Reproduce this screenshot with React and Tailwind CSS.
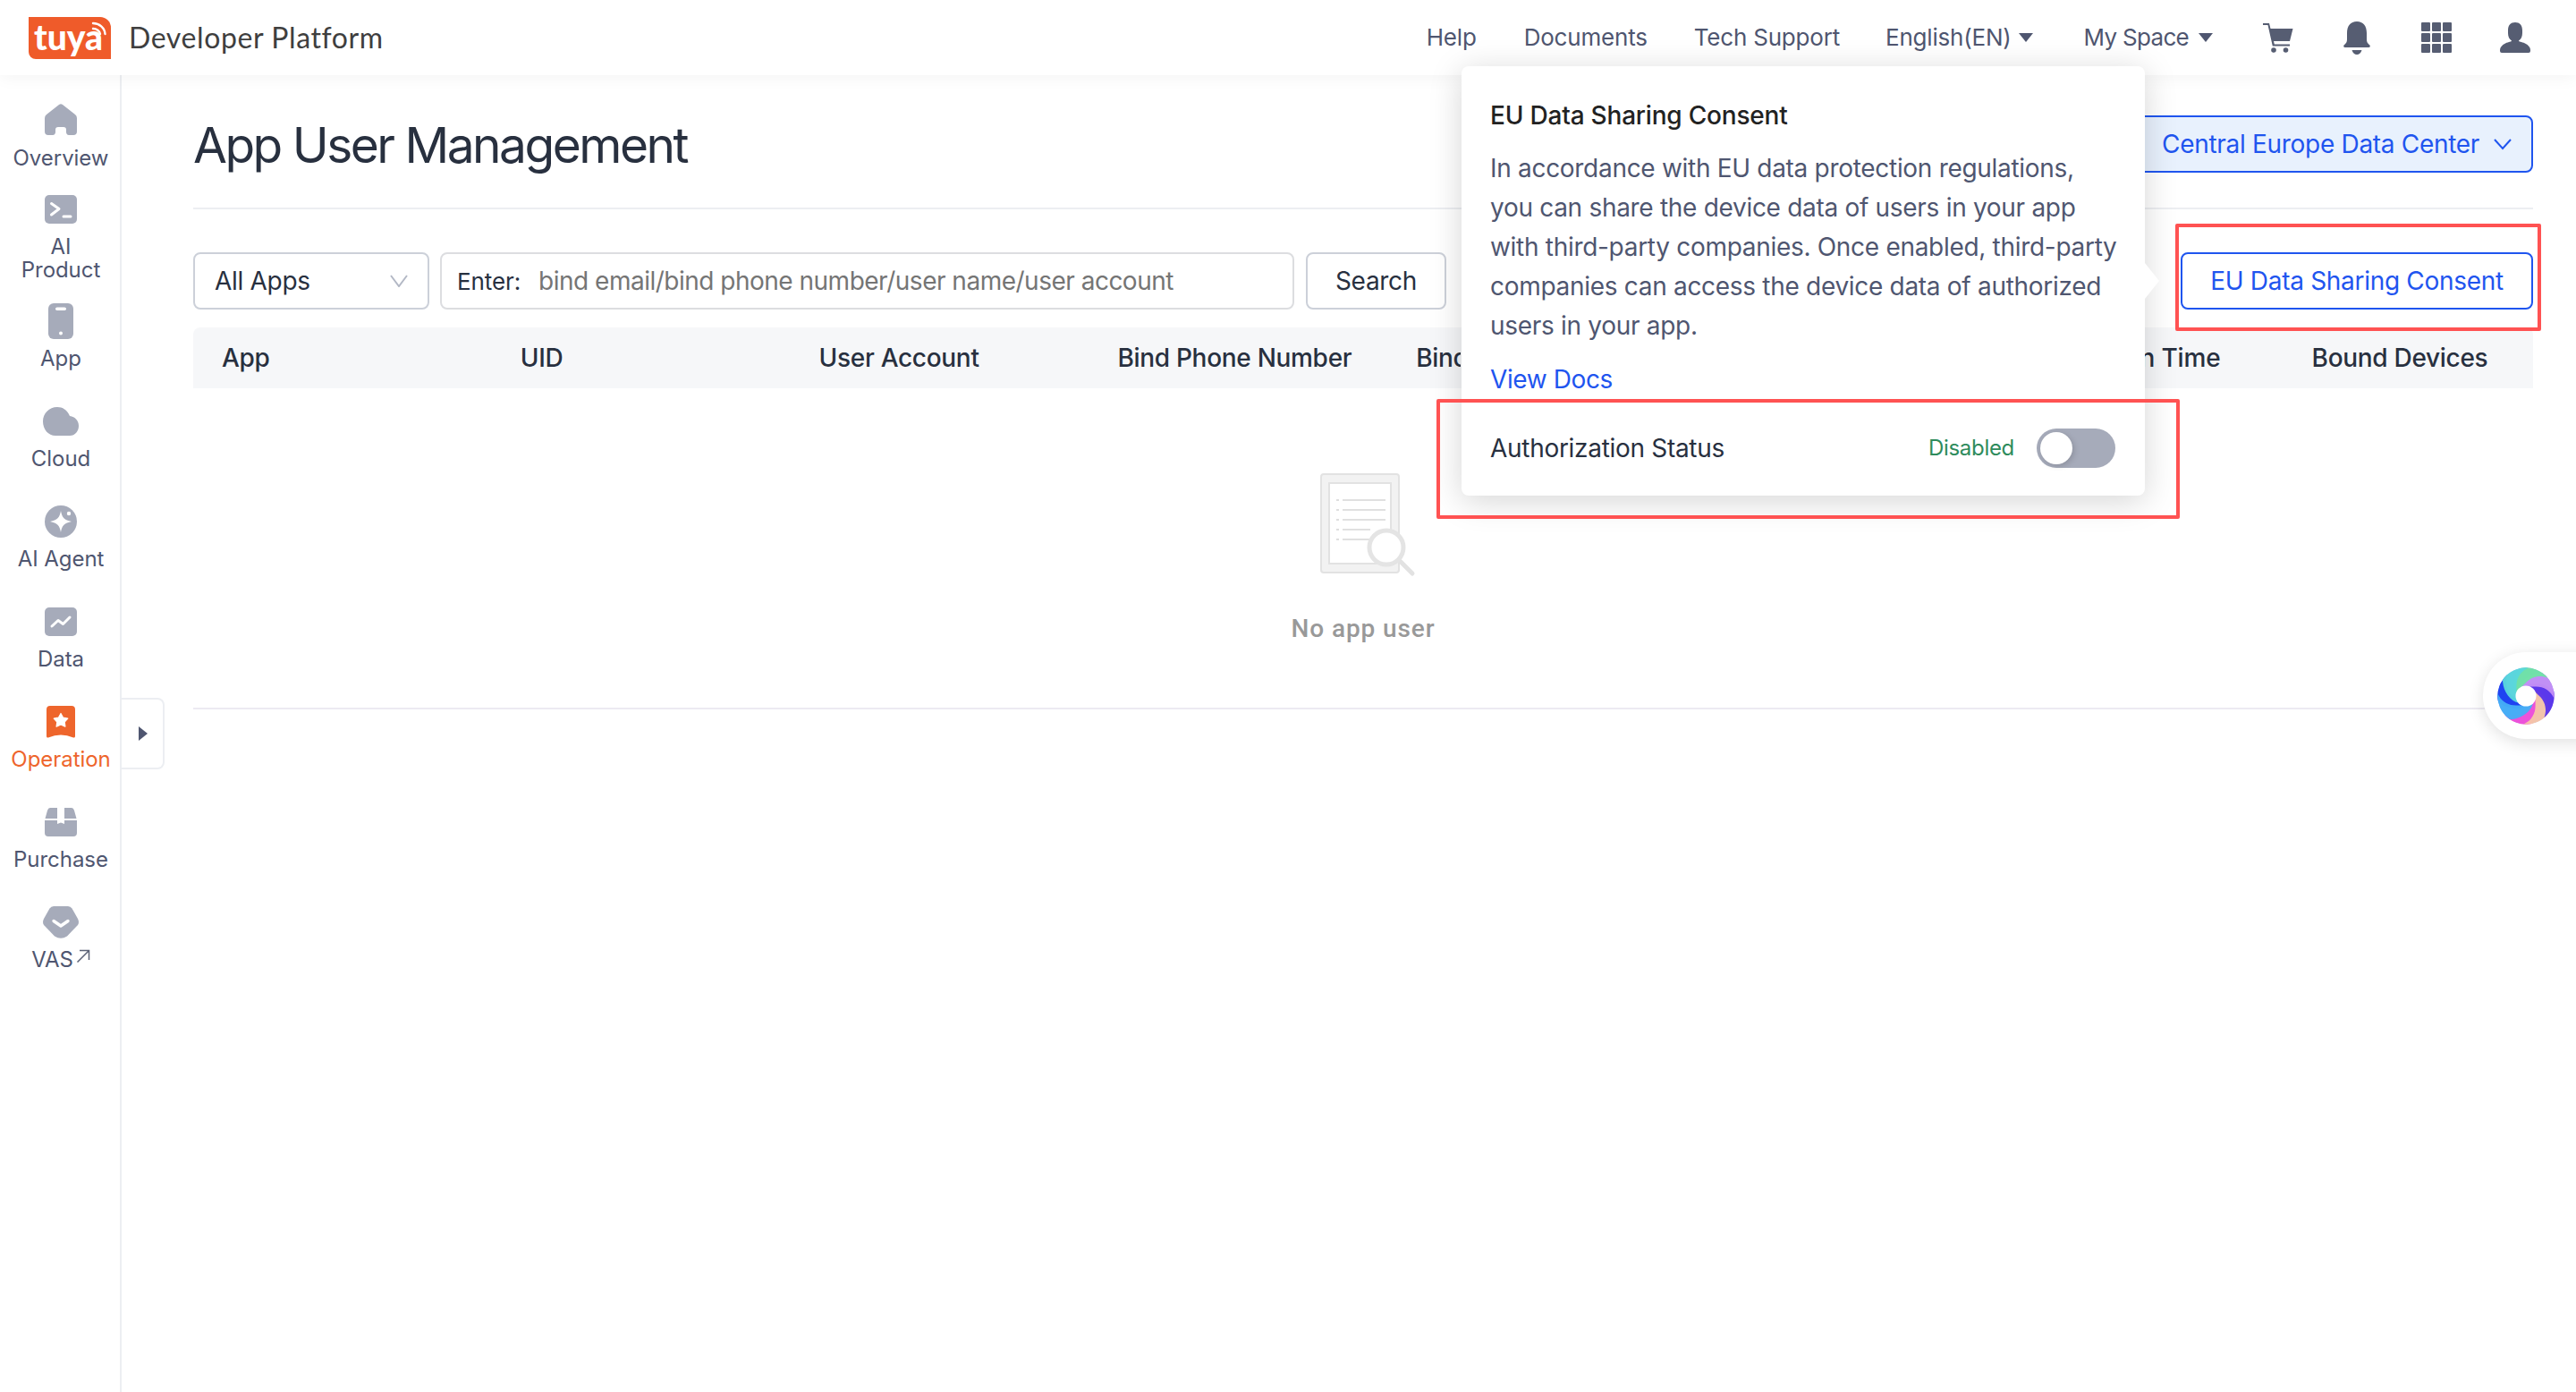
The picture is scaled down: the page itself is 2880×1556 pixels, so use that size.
const I = "fill-[#a6abba]";

const icons = {
  home: (
    <svg width="36" height="36" viewBox="0 0 36 36" className={I}>
      <path d="M16 1 Q18 -0.5 20 1 L34 12 Q36 13.5 36 16 V31 Q36 35 32 35 H27 Q24.5 35 24 32 V29 Q24 26 21 26 H15 Q12 26 12 29 V32 Q11.5 35 9 35 H4 Q0 35 0 31 V16 Q0 13.5 2 12 Z" />
    </svg>
  ),
  term: (
    <svg width="36" height="32" viewBox="0 0 36 32">
      <rect width="36" height="32" rx="5" className={I} />
      <path d="M7.5 9.5 L16 15.5 L7.5 22" fill="none" stroke="#fff" strokeWidth="3" strokeLinecap="round" strokeLinejoin="round" />
      <path d="M21 24 H29" stroke="#fff" strokeWidth="3" strokeLinecap="round" />
    </svg>
  ),
  phone: (
    <svg width="28" height="40" viewBox="0 0 28 40">
      <rect width="28" height="40" rx="6" className={I} />
      <rect x="8" y="4.5" width="12" height="3.5" rx="1.75" fill="#fff" />
      <circle cx="14" cy="33.5" r="2" fill="#fff" />
    </svg>
  ),
  cloud: (
    <svg width="40" height="32" viewBox="0 0 40 32" className={I}>
      <path d="M16 0 C22 0 27 3 30 10 C36 11 40 15 40 21 C40 27 36 32 30 32 H14 C6 32 0 25 0 16 C0 7 7 0 16 0 Z" />
    </svg>
  ),
  agent: (
    <svg width="36" height="36" viewBox="0 0 36 36">
      <circle cx="18" cy="18" r="18" className={I} />
      <path d="M18 6 C19.2 13.5 22 16.5 30 18 C22 19.5 19.2 22.5 18 30 C16.8 22.5 14 19.5 6 18 C14 16.5 16.8 13.5 18 6 Z" fill="#fff" />
      <circle cx="27" cy="9" r="2.2" fill="#fff" />
    </svg>
  ),
  data: (
    <svg width="36" height="32" viewBox="0 0 36 32">
      <rect width="36" height="32" rx="5" className={I} />
      <path d="M8 21 L15 14.5 L20.5 18.5 L28 11" fill="none" stroke="#fff" strokeWidth="3" strokeLinecap="round" strokeLinejoin="round" />
    </svg>
  ),
  op: (
    <svg width="32" height="36" viewBox="0 0 32 36">
      <path d="M4 0 H28 Q32 0 32 4 V34 Q32 36 30 35.5 Q23 32.5 16 32.5 Q9 32.5 2 35.5 Q0 36 0 34 V4 Q0 0 4 0 Z" fill="#ee652c" />
      <path d="M16 8.5 L18.6 13.2 L23.8 14.2 L20.2 18 L20.9 23.2 L16 21 L11.1 23.2 L11.8 18 L8.2 14.2 L13.4 13.2 Z" fill="#fff" stroke="#fff" strokeWidth="1.2" strokeLinejoin="round" />
    </svg>
  ),
  box: (
    <svg width="36" height="32" viewBox="0 0 36 32" className={I}>
      <path d="M6 0 H14 V12 H0.5 L3 3 Q3.8 0 6 0 Z" />
      <path d="M22 0 H30 Q32.2 0 33 3 L35.5 12 H22 Z" />
      <path d="M0 14 H14 V18 L18 16.5 L22 18 V14 H36 V28 Q36 32 32 32 H4 Q0 32 0 28 Z" />
    </svg>
  ),
  vas: (
    <svg width="40" height="36" viewBox="0 0 40 36">
      <path d="M12 0 H28 Q31 0 32.5 2.5 L39 14 Q41 18 39 21 L27 33.5 Q20 38 13 33.5 L1 21 Q-1 18 1 14 L7.5 2.5 Q9 0 12 0 Z" className={I} />
      <path d="M12 16.5 L20 22 L28 16.5" fill="none" stroke="#fff" strokeWidth="3.4" strokeLinecap="round" strokeLinejoin="round" />
    </svg>
  ),
};

const navItems = [
  { icon: icons.home, lines: ["Overview"], h: "h-[100px]", mt: "mt-[12px]" },
  { icon: icons.term, lines: ["AI", "Product"], h: "h-[125px]", mt: "mt-[11px]" },
  { icon: icons.phone, lines: ["App"], h: "h-[112px]", mt: "mt-[11px]" },
  { icon: icons.cloud, lines: ["Cloud"], h: "h-[112px]", mt: "mt-[11px]" },
  { icon: icons.agent, lines: ["AI Agent"], h: "h-[112px]", mt: "mt-[11px]" },
  { icon: icons.data, lines: ["Data"], h: "h-[112px]", mt: "mt-[11px]" },
  { icon: icons.op, lines: ["Operation"], h: "h-[112px]", mt: "mt-[11px]", active: true },
  { icon: icons.box, lines: ["Purchase"], h: "h-[112px]", mt: "mt-[11px]" },
  { icon: icons.vas, lines: ["VAS"], h: "h-[112px]", mt: "mt-[11px]", ext: true },
];

function Caret({ className }) {
  return (
    <svg width="18" height="12" viewBox="0 0 18 12" className={className}>
      <path d="M1 1 H17 L9 11 Z" fill="#4f5670" />
    </svg>
  );
}

function Orb() {
  const petals = [
    ["#f04fd8", 170],
    ["#f7c6a8", 125],
    ["#5a34ea", 80],
    ["#c490f5", 35],
    ["#6fe3a5", -10],
    ["#1b3ff0", 260],
    ["#45aef6", 215],
    ["#5ad7dc", 305],
  ];
  return (
    <svg width="64" height="64" viewBox="-32 -32 64 64">
      <circle r="31.5" fill="#7f8cf0" />
      {petals.map(([c, a]) => (
        <path
          key={a}
          d="M0 -31.7 A31.7 31.7 0 0 1 27.4 -15.9 C19 -21 10 -20 3 -15 C-3 -11 -7 -8 -11 -2 C-15 -11 -10 -25 0 -31.7 Z"
          fill={c}
          opacity="0.96"
          transform={`rotate(${a})`}
        />
      ))}
      <circle r="11.5" fill="#fff" />
    </svg>
  );
}

function Empty() {
  return (
    <svg width="108" height="116" viewBox="0 0 108 116">
      <rect x="1" y="1" width="87" height="110" rx="3" fill="#f2f2f2" stroke="#e2e2e2" strokeWidth="2" />
      <rect x="10" y="11" width="69" height="90" fill="#fff" stroke="#e2e2e2" strokeWidth="2" />
      {[30, 41, 52, 63, 74].map((y, i) => (
        <g key={y}>
          <path d={`M18 ${y} H21`} stroke="#dedede" strokeWidth="2" />
          <path d={`M25 ${y} H${i < 3 ? 73 : 56}`} stroke="#e0e0e0" strokeWidth="2" />
        </g>
      ))}
      <path d="M88 97 L103 112" stroke="#e2e2e2" strokeWidth="5" strokeLinecap="round" />
      <circle cx="74" cy="83" r="19" fill="#fff" stroke="#e4e4e4" strokeWidth="5" />
    </svg>
  );
}

export default function App() {
  return (
    <div className="relative h-[1556px] w-[2880px] overflow-hidden bg-white font-['Inter',sans-serif] text-[#4f5670]">
      <header className="relative z-10 flex h-[84px] items-center bg-white pl-[32px] pr-[51px] shadow-[0_2px_18px_rgba(0,0,0,0.05)]">
        <div className="relative flex h-[47px] w-[92px] items-center rounded-tr-[12px] rounded-bl-[8px] bg-[#ef5b2a] pb-[2px] pl-[6px] font-['Lato',sans-serif] text-[39px] leading-none font-black text-white">
          tuya
          <svg width="18" height="18" viewBox="0 0 18 18" className="absolute top-[5px] right-[4px]">
            <path d="M2 2 C9 2 15 7 15.5 14" fill="none" stroke="#fff" strokeWidth="2.4" strokeLinecap="round" />
            <path d="M2 8 C6 8 9.5 10.5 10 14" fill="none" stroke="#fff" strokeWidth="2.4" strokeLinecap="round" />
          </svg>
        </div>
        <span className="ml-[20px] font-['Lato',sans-serif] text-[32px] leading-none tracking-[0.6px] text-[#3f3f3f]">Developer Platform</span>

        <nav className="ml-auto flex items-center text-[26px] leading-none tracking-[-0.2px]">
          <span>Help</span>
          <span className="ml-[53px]">Documents</span>
          <span className="ml-[52px]">Tech Support</span>
          <span className="ml-[51px]">English(EN)</span>
          <Caret className="ml-[7px]" />
          <span className="ml-[56px] tracking-[-0.7px]">My Space</span>
          <Caret className="ml-[10px]" />
          <svg width="34" height="34" viewBox="0 0 34 34" className="ml-[55px]" fill="#565d72">
            <path d="M0 1 H7 L8.5 7 H33.5 L30 21 H12 L12.8 24.5 H30 V26.5 H10.8 L5.5 3 H0 Z" />
            <circle cx="12" cy="31" r="2.8" />
            <circle cx="25.5" cy="31" r="2.8" />
          </svg>
          <svg width="30" height="37" viewBox="0 0 30 37" className="ml-[56px]" fill="#565d72">
            <path d="M15 0 C22 0 26 5 26 13 V20 C26 24 28 25 29.5 26.5 Q30.5 29 28 29 H2 Q-0.5 29 0.5 26.5 C2 25 4 24 4 20 V13 C4 5 8 0 15 0 Z" />
            <path d="M9.5 32 H20.5 C19.5 35.5 17.5 37 15 37 C12.5 37 10.5 35.5 9.5 32 Z" />
          </svg>
          <div className="ml-[57px] grid grid-cols-[repeat(3,10px)] grid-rows-[repeat(3,10px)] gap-[2px]">
            {Array.from({ length: 9 }).map((_, i) => (
              <span key={i} className="rounded-[1px] bg-[#565d72]" />
            ))}
          </div>
          <svg width="34" height="34" viewBox="0 0 34 34" className="ml-[54px]" fill="#565d72">
            <path d="M17 0 C22 0 25 3 25 9 V12 C25 16 23.5 19 21 20.5 C21 22 24 21.5 28 23.5 C32 25.5 34 28 34 31 V32 Q34 34 32 34 H2 Q0 34 0 32 V31 C0 28 2 25.5 6 23.5 C10 21.5 13 22 13 20.5 C10.5 19 9 16 9 12 V9 C9 3 12 0 17 0 Z" />
          </svg>
        </nav>
      </header>

      <div className="flex h-[1472px]">
        <aside className="flex w-[136px] shrink-0 flex-col border-r-2 border-[#eceef2] pt-[32px] pl-[2px]">
          {navItems.map((n) => (
            <div key={n.lines[0]} className={`flex flex-col items-center ${n.h}`}>
              <div className="flex h-[36px] items-center justify-center">{n.icon}</div>
              <div className={`flex flex-col items-center text-center text-[24px] leading-[26px] tracking-[-0.05px] ${n.mt} ${n.active ? "text-[#ee652c]" : "text-[#4f5670]"}`}>
                {n.lines.map((l) => (
                  <span key={l} className="flex items-center">
                    {l}
                    {n.ext && (
                      <svg width="16" height="16" viewBox="0 0 16 16" className="mb-[8px] ml-[3px]">
                        <path d="M1.5 14.5 L14.5 1.5 M4 1.5 H14.5 V12" fill="none" stroke="#5a6176" strokeWidth="1.5" />
                      </svg>
                    )}
                  </span>
                ))}
              </div>
            </div>
          ))}
        </aside>

        <main className="flex-1 pr-[48px] pl-[80px]">
          <div className="flex h-[150px] items-center justify-between border-b-2 border-[#eceef2] pt-[6px]">
            <h1 className="mt-[2px] text-[55px] leading-none font-normal tracking-[-2.5px] text-[#28303f]">App User Management</h1>
            <div className="flex h-[64px] w-[442px] items-center justify-between rounded-[8px] border-2 border-[#1f55ef] bg-[#e8f1fd] pr-[22px] pl-[25px] text-[28px] tracking-[-0.3px] text-[#1f55ef]">
              <span>Central Europe Data Center</span>
              <svg width="20" height="13" viewBox="0 0 20 13" fill="none" stroke="#1f55ef" strokeWidth="2">
                <path d="M1 1 L10 11 L19 1" />
              </svg>
            </div>
          </div>

          <div className="mt-[48px] flex h-[64px] items-stretch text-[28px] tracking-[-0.3px]">
            <div className="flex w-[264px] items-center justify-between rounded-[8px] border-2 border-[#ccd0d9] pr-[22px] pl-[22px] text-[#28303f]">
              <span>All Apps</span>
              <svg width="20" height="14" viewBox="0 0 20 14" fill="none" stroke="#b3b8c5" strokeWidth="2">
                <path d="M1 1 L10 13 L19 1" />
              </svg>
            </div>
            <div className="ml-[12px] flex w-[955px] items-center rounded-[8px] border-2 border-[#dcdde0] pl-[17px]">
              <span className="text-[26px] tracking-[-0.1px] text-[#28303f]">Enter:</span>
              <span className="ml-[20px] tracking-[-0.5px] text-[#757575]">bind email/bind phone number/user name/user account</span>
            </div>
            <div className="ml-[13px] flex w-[157px] items-center justify-center rounded-[8px] border-2 border-[#ccd0d9] text-[#28303f]">Search</div>
            <div className="ml-auto flex w-[394px] items-center justify-center rounded-[8px] border-2 border-[#1f55ef] text-[#1f55ef]">EU Data Sharing Consent</div>
          </div>

          <div className="mt-[20px] grid h-[68px] grid-cols-[repeat(7,333.8px)_1fr] items-center rounded-t-[8px] bg-[#f6f7f9] pl-[32px] text-[28px] font-medium tracking-[-0.3px] text-[#28303f]">
            {["App", "UID", "User Account", "Bind Phone Number"].map((h) => (
              <span key={h} className="whitespace-nowrap">{h}</span>
            ))}
            <span className="w-[50px] overflow-hidden whitespace-nowrap">Bind Email</span>
            <span className="whitespace-nowrap">User Name</span>
            <span className="whitespace-nowrap tracking-[-0.15px]">Registration Time</span>
            <span className="whitespace-nowrap">Bound Devices</span>
          </div>

          <div className="flex h-[359px] flex-col items-center border-b-2 border-[#eceaf2] pt-[95px]">
            <div className="ml-[12px]"><Empty /></div>
            <span className="mt-[44px] font-['Roboto',sans-serif] text-[28px] leading-none font-medium tracking-[0.9px] text-[#999999]">No app user</span>
          </div>
        </main>
      </div>

      {/* collapse tab */}
      <div className="absolute top-[780px] left-[136px] flex h-[80px] w-[48px] items-center justify-center rounded-r-[8px] border-2 border-l-0 border-[#eceef2] bg-white pl-[2px]">
        <svg width="10" height="16" viewBox="0 0 10 16"><path d="M0 0 L10 8 L0 16 Z" fill="#4f5670" /></svg>
      </div>

      {/* popover */}
      <div className="absolute top-[74px] left-[1634px] z-20 h-[480px] w-[764px] rounded-[8px] bg-white pt-[38px] pr-[33px] pl-[32px] shadow-[0_6px_36px_rgba(0,0,0,0.17)]">
        <div className="absolute top-[220px] right-[-16px] h-0 w-0 border-y-[20px] border-l-[16px] border-y-transparent border-l-white" />
        <div className="text-[28px] leading-[34px] font-medium tracking-[-0.2px] text-[#222222]">EU Data Sharing Consent</div>
        <p className="mt-[20px] text-[28px] leading-[44px] tracking-[-0.3px] whitespace-nowrap text-[#4f5670]">
          In accordance with EU data protection regulations,<br />
          you can share the device data of users in your app<br />
          with third-party companies. Once enabled, third-party<br />
          companies can access the device data of authorized<br />
          users in your app.
        </p>
        <div className="mt-[18px] text-[28px] leading-[40px] tracking-[-0.4px] text-[#1f55ef]">View Docs</div>
        <div className="mt-[35px] flex h-[44px] items-center justify-between text-[28px] tracking-[-0.3px] text-[#28303f]">
          <span>Authorization Status</span>
          <div className="flex items-center">
            <span className="text-[24px] text-[#2e8b5c]">Disabled</span>
            <div className="ml-[25px] flex h-[44px] w-[88px] items-center rounded-full bg-[#a6abba] pl-[4px]">
              <span className="h-[36px] w-[36px] rounded-full bg-white shadow-[2px_2px_6px_rgba(0,0,0,0.15)]" />
            </div>
          </div>
        </div>
      </div>

      {/* annotation boxes */}
      <div className="absolute top-[446px] left-[1606px] z-30 h-[134px] w-[831px] rounded-[2px] border-[4px] border-[#ff5252]" />
      <div className="absolute top-[250px] left-[2432px] z-30 h-[120px] w-[409px] rounded-[2px] border-[4px] border-[#ff5252]" />

      {/* floating assistant */}
      <div className="absolute top-[729px] left-[2776px] z-10 flex h-[97px] w-[120px] items-center rounded-l-[48px] bg-white pl-[16px] shadow-[0_4px_18px_rgba(0,0,0,0.12)]">
        <Orb />
      </div>
    </div>
  );
}
